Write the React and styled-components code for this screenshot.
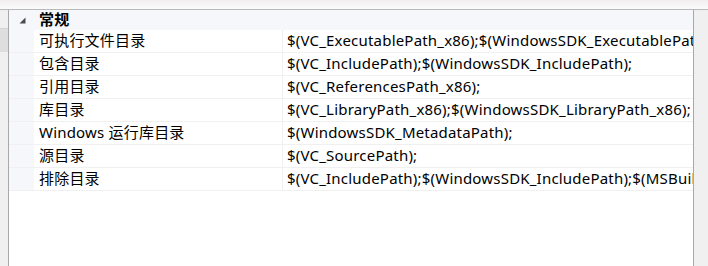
import React from "react";
import styled, { createGlobalStyle } from "styled-components";

const GlobalStyle = createGlobalStyle`
  html, body {
    margin: 0;
    padding: 0;
    background: #ffffff;
  }
  body {
    font-family: "Noto Sans", "Noto Sans CJK SC", sans-serif;
  }
`;

const Frame = styled.div`
  width: 708px;
  height: 266px;
  display: flex;
  flex-direction: column;
  overflow: hidden;
  background: #ffffff;
`;

const TopBand = styled.div`
  height: 9px;
  flex: none;
  background: linear-gradient(to bottom, #f1eeee 0%, #f6f6f6 60%, #fbfbfb 100%);
  border-bottom: 1px solid #b9b9b9;
`;

const Body = styled.div`
  flex: 1;
  display: flex;
  min-height: 0;
`;

const SidePane = styled.div`
  width: 8px;
  flex: none;
  display: flex;
  flex-direction: column;
  background: #f0f0f0;
  border-right: 1px solid #a8a8a8;
`;

const SideCell = styled.div`
  height: ${(p) => p.h}px;
  flex: none;
  background: ${(p) => (p.dark ? "#dedede" : "#f0f0f0")};
  border-bottom: 1px solid ${(p) => (p.line ? "#d4d4d4" : "transparent")};
`;

const Grid = styled.div`
  flex: 1;
  display: flex;
  flex-direction: column;
  background: #ffffff;
`;

const Row = styled.div`
  display: grid;
  grid-template-columns: 25px 249px 1fr;
  height: ${(p) => (p.header ? 20 : 22)}px;
  border-bottom: ${(p) => (p.header ? "none" : "1px solid #f0f0f0")};
  background: ${(p) => (p.header ? "#f5f7fa" : "#ffffff")};
  font-size: 15px;
  letter-spacing: 0.2px;
  color: #000000;
  white-space: nowrap;
  overflow: hidden;
`;

const Gutter = styled.div`
  background: #f5f7fa;
  display: flex;
  align-items: center;
  justify-content: center;
  padding-left: 1px;
`;

const NameCell = styled.div`
  display: flex;
  align-items: center;
  padding-left: 5px;
  padding-bottom: 3px;
  font-weight: ${(p) => (p.bold ? 700 : 400)};
  border-right: 1px solid ${(p) => (p.plain ? "transparent" : "#f0f0f0")};
  overflow: hidden;
`;

const ValueCell = styled.div`
  display: flex;
  align-items: center;
  padding-left: 4px;
  padding-bottom: 3px;
  overflow: hidden;
`;

const ScrollBar = styled.div`
  width: 14px;
  flex: none;
  background: #f0f0f0;
  border-left: 1px solid #a8a8a8;
`;

const Expander = () => (
  <svg width="7" height="7" viewBox="0 0 7 7">
    <polygon points="6.5,0.5 6.5,6.5 0.5,6.5" fill="#4a4a4a" />
  </svg>
);

const rows = [
  ["可执行文件目录", "$(VC_ExecutablePath_x86);$(WindowsSDK_ExecutablePath);$(VS_ExecutablePath)"],
  ["包含目录", "$(VC_IncludePath);$(WindowsSDK_IncludePath);"],
  ["引用目录", "$(VC_ReferencesPath_x86);"],
  ["库目录", "$(VC_LibraryPath_x86);$(WindowsSDK_LibraryPath_x86);"],
  ["Windows 运行库目录", "$(WindowsSDK_MetadataPath);"],
  ["源目录", "$(VC_SourcePath);"],
  ["排除目录", "$(VC_IncludePath);$(WindowsSDK_IncludePath);$(MSBuild_ExecutablePath)"],
];

export default function App() {
  return (
    <Frame>
      <GlobalStyle />
      <TopBand />
      <Body>
        <SidePane>
          <SideCell h={18} line />
          <SideCell h={22} dark />
          <SideCell h={215} />
        </SidePane>
        <Grid>
          <Row header>
            <Gutter>
              <Expander />
            </Gutter>
            <NameCell bold plain>常规</NameCell>
            <ValueCell />
          </Row>
          {rows.map(([name, value]) => (
            <Row key={name}>
              <Gutter />
              <NameCell>{name}</NameCell>
              <ValueCell>{value}</ValueCell>
            </Row>
          ))}
        </Grid>
        <ScrollBar />
      </Body>
    </Frame>
  );
}
